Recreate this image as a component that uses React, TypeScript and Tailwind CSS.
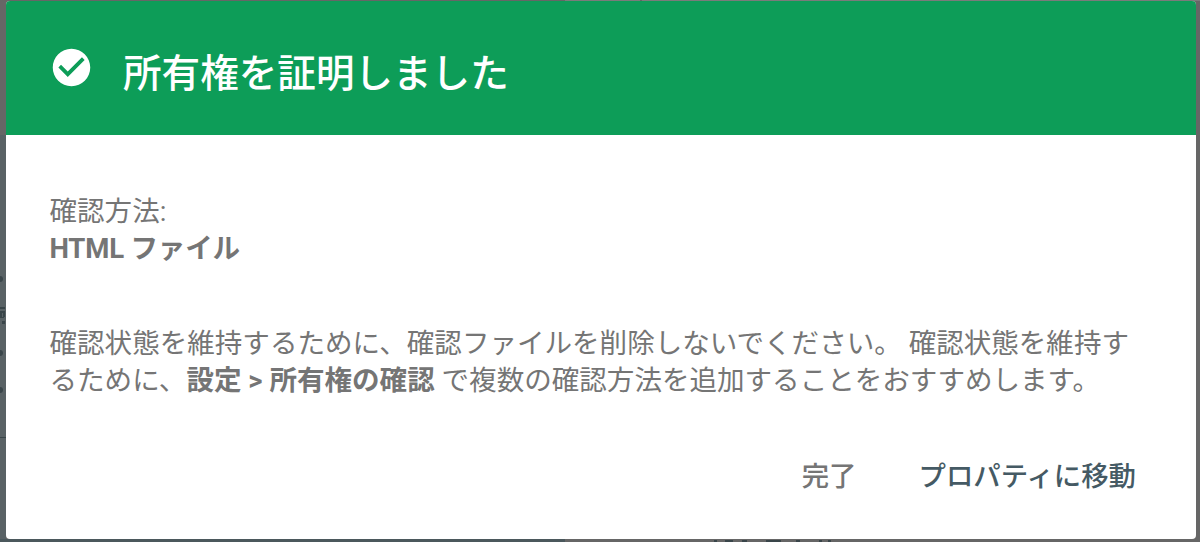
import React from 'react';

interface DialogButtonProps {
  label: string;
  className: string;
}

function DialogButton({ label, className }: DialogButtonProps) {
  return (
    <button type="button" className={`font-medium whitespace-nowrap ${className}`}>
      {label}
    </button>
  );
}

// Dimmed page content that peeks out along the left edge of the dialog
function PageEdge() {
  return (
    <svg className="absolute inset-0" width="1200" height="542" viewBox="0 0 1200 542">
      <path d="M0 135h6v407H0z" fill="#596265" />
      <path d="M0 539h565v3H0z" fill="#4b585c" />
      <path d="M565 0h75v1h-75z M642 0h558v1H642z" fill="#7b7b7b" />
      <g fill="#394549">
        <circle cx="0" cy="279" r="3" />
        <circle cx="0" cy="353" r="3" />
        <circle cx="0" cy="390" r="3" />
        <path d="M0 307h5v2H0z M0 311h2v6H0z M2 311h3v2H2z M3 313h2v4H3z M0 317h4v1H0z M2 321h3v3H2z" />
        <path d="M0 437h6v1H0z" />
        <path d="M714 540h3v2h-3z M725 540h8v2h-8z M742 540h5v2h-5z M766 540h15v2h-15z M796 540h4v2h-4z M819 540h3v2h-3z M828 540h3v2h-3z" />
      </g>
    </svg>
  );
}

export default function App() {
  return (
    <div className="relative h-[542px] w-[1200px] overflow-hidden bg-[#666666] pt-px pl-[5.5px] font-['Roboto','Noto_Sans_CJK_JP',sans-serif]">
      <PageEdge />
      <div className="relative flex h-[538px] w-[1190.5px] flex-col overflow-hidden rounded-[4px] bg-white">
        <header className="flex h-[134px] shrink-0 items-center bg-[#0d9d58] pl-[43.5px] text-white">
          <svg className="mb-[2px] size-[45px] shrink-0" viewBox="0 0 24 24" fill="currentColor">
            <path d="M12 2C6.48 2 2 6.48 2 12s4.48 10 10 10 10-4.48 10-10S17.52 2 12 2zm-2 15l-5-5 1.41-1.41L10 14.17l7.59-7.59L19 8l-9 9z" />
          </svg>
          <h1 className="ml-[29px] pt-[12px] text-[38.6px] leading-[48px] font-medium">
            所有権を証明しました
          </h1>
        </header>

        <div className="px-[44px] pt-[58px] text-[27.55px] leading-[37px] text-[#757575]">
          <p>確認方法:</p>
          <p className="font-bold tracking-[-0.2px]">HTML ファイル</p>
          <p className="mt-[58px] whitespace-nowrap">
            確認状態を維持するために、確認ファイルを削除しないでください。 確認状態を維持す
            <br />
            るために、<b>設定 &gt; 所有権の確認</b> で複数の確認方法を追加することをおすすめします。
          </p>
        </div>

        <footer className="mt-[58px] flex justify-end gap-[62px] pr-[60px] text-[27.4px] leading-[40px]">
          <DialogButton label="完了" className="text-[#757575]" />
          <DialogButton label="プロパティに移動" className="text-[#455a64]" />
        </footer>
      </div>
    </div>
  );
}
